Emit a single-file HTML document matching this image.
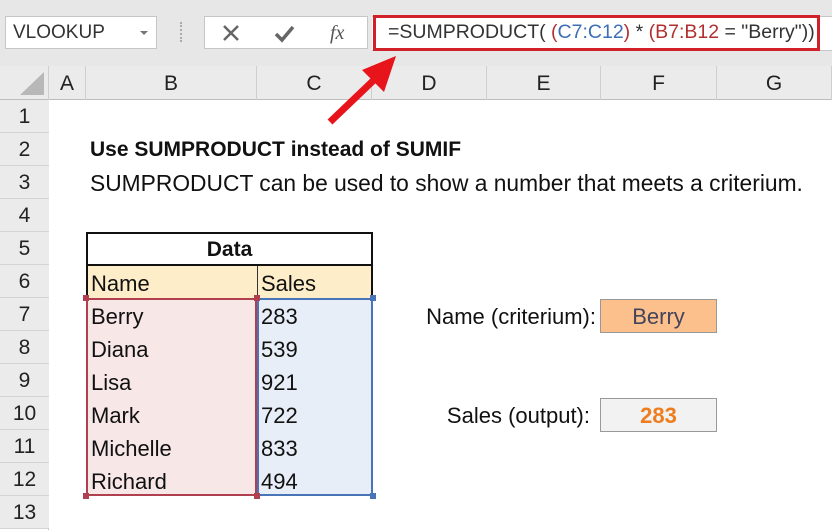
<!DOCTYPE html>
<html><head><style>
body{margin:0;width:832px;height:530px;overflow:hidden;background:#fff;font-family:"Liberation Sans",sans-serif;position:relative}
.a{position:absolute}
.t{position:absolute;font-size:22px;color:#111;white-space:nowrap;line-height:34px}
.ch{position:absolute;top:66px;height:34px;line-height:36px;text-align:center;font-size:21px;color:#222;border-right:1px solid #cfcfcf;box-sizing:border-box}
.rh{position:absolute;left:0;width:49px;height:33px;line-height:34px;text-align:center;font-size:21px;color:#222;border-bottom:1px solid #d4d4d4;box-sizing:border-box;background:#ebebeb}
</style></head><body>
<div class="a" style="left:0;top:0;width:832px;height:66px;background:#e7e7e7"></div>
<div class="a" style="left:5px;top:16px;width:152px;height:33px;background:#fff;border:1px solid #c6c6c6;box-sizing:border-box"></div>
<div class="t" style="left:13px;top:16px;font-size:19px;color:#333;line-height:33px">VLOOKUP</div>
<div class="a" style="left:140px;top:31px;border:4px solid transparent;border-top:4px solid #777"></div>
<div class="a" style="left:180px;top:22px;width:2px;height:20px;border-left:2px dotted #aaa"></div>
<div class="a" style="left:204px;top:16px;width:164px;height:33px;background:#fff;border:1px solid #c6c6c6;box-sizing:border-box"></div>
<svg class="a" style="left:220px;top:22px" width="140" height="22"><path d="M4 4L18 18M18 4L4 18" stroke="#666" stroke-width="2.5"/><path d="M56 12L62 18L73 5" stroke="#666" stroke-width="3.5" fill="none"/><text x="110" y="17" font-family="Liberation Serif" font-style="italic" font-size="20" fill="#555">fx</text></svg>
<div class="a" style="left:372px;top:16px;width:460px;height:33px;background:#fff;border-top:1px solid #c6c6c6;border-bottom:1px solid #c6c6c6"></div>
<div class="a" style="left:373px;top:15px;width:447px;height:36px;border:3px solid #d0202a;box-sizing:border-box"></div>
<div class="t" style="left:388px;top:16px;font-size:19.5px;color:#333;line-height:33px">=SUMPRODUCT( <span style="color:#b03030">(</span><span style="color:#3c6eb4">C7:C12</span><span style="color:#b03030">)</span> * <span style="color:#b03030">(B7:B12</span> = "Berry"))</div>
<div class="a" style="left:0;top:66px;width:832px;height:34px;background:#ebebeb;border-bottom:1px solid #bdbdbd;box-sizing:border-box"></div>
<div class="a" style="left:0;top:66px;width:49px;height:34px;border-right:1px solid #cfcfcf;box-sizing:border-box"></div>
<svg class="a" style="left:18px;top:70px" width="28" height="26"><path d="M26 2L26 25L2 25Z" fill="#b8b8b8"/></svg>
<div class="ch" style="left:49px;width:37px">A</div>
<div class="ch" style="left:86px;width:171px">B</div>
<div class="ch" style="left:257px;width:115px">C</div>
<div class="ch" style="left:372px;width:115px">D</div>
<div class="ch" style="left:487px;width:114px">E</div>
<div class="ch" style="left:601px;width:116px">F</div>
<div class="ch" style="left:717px;width:115px">G</div>
<div class="a" style="left:48px;top:100px;width:1px;height:430px;background:#bdbdbd"></div>
<div class="rh" style="top:100px">1</div><div class="rh" style="top:133px">2</div><div class="rh" style="top:166px">3</div><div class="rh" style="top:199px">4</div><div class="rh" style="top:232px">5</div><div class="rh" style="top:265px">6</div><div class="rh" style="top:298px">7</div><div class="rh" style="top:331px">8</div><div class="rh" style="top:364px">9</div><div class="rh" style="top:397px">10</div><div class="rh" style="top:430px">11</div><div class="rh" style="top:463px">12</div><div class="rh" style="top:496px">13</div>
<svg class="a" style="left:320px;top:50px" width="90" height="80"><path d="M10 72L56 28" stroke="#e8141c" stroke-width="7"/><path d="M76 6L42 20L64 42Z" fill="#e8141c"/></svg>
<div class="t" style="left:90px;top:133px;font-weight:bold;font-size:21px">Use SUMPRODUCT instead of SUMIF</div>
<div class="t" style="left:90px;top:166px;font-size:22.8px">SUMPRODUCT can be used to show a number that meets a criterium.</div>
<div class="a" style="left:86px;top:232px;width:287px;height:34px;border:2px solid #111;box-sizing:border-box"></div>
<div class="t" style="left:86px;top:233px;width:287px;text-align:center;font-weight:bold;font-size:21px">Data</div>
<div class="a" style="left:86px;top:266px;width:287px;height:32px;background:#fdedc8;border-left:2px solid #111;border-right:2px solid #111;box-sizing:border-box"></div>
<div class="a" style="left:257px;top:266px;width:1px;height:32px;background:#333"></div>
<div class="t" style="left:91px;top:267px">Name</div><div class="t" style="left:261px;top:267px">Sales</div>
<div class="a" style="left:86px;top:298px;width:171px;height:198px;background:#f8e7e7;border:2px solid #b04050;box-sizing:border-box"></div>
<div class="a" style="left:257px;top:298px;width:116px;height:198px;background:#e8eef7;border:2px solid #4a74b8;box-sizing:border-box"></div>
<div class="a" style="left:83px;top:295px;width:6px;height:6px;background:#b04050"></div>
<div class="a" style="left:254px;top:295px;width:6px;height:6px;background:#b04050"></div>
<div class="a" style="left:83px;top:493px;width:6px;height:6px;background:#b04050"></div>
<div class="a" style="left:254px;top:493px;width:6px;height:6px;background:#b04050"></div>
<div class="a" style="left:370px;top:295px;width:6px;height:6px;background:#4a74b8"></div>
<div class="a" style="left:370px;top:493px;width:6px;height:6px;background:#4a74b8"></div>
<div class="t" style="left:91px;top:300px">Berry</div><div class="t" style="left:261px;top:300px">283</div>
<div class="t" style="left:91px;top:333px">Diana</div><div class="t" style="left:261px;top:333px">539</div>
<div class="t" style="left:91px;top:366px">Lisa</div><div class="t" style="left:261px;top:366px">921</div>
<div class="t" style="left:91px;top:399px">Mark</div><div class="t" style="left:261px;top:399px">722</div>
<div class="t" style="left:91px;top:432px">Michelle</div><div class="t" style="left:261px;top:432px">833</div>
<div class="t" style="left:91px;top:465px">Richard</div><div class="t" style="left:261px;top:465px">494</div>
<div class="t" style="left:396px;top:300px;width:200px;text-align:right">Name (criterium):</div>
<div class="a" style="left:600px;top:299px;width:117px;height:34px;background:#fcc08c;border:1px solid #999;box-sizing:border-box"></div>
<div class="t" style="left:600px;top:300px;width:117px;text-align:center;color:#44445a">Berry</div>
<div class="t" style="left:390px;top:399px;width:200px;text-align:right">Sales (output):</div>
<div class="a" style="left:600px;top:398px;width:117px;height:34px;background:#f2f2f2;border:1px solid #999;box-sizing:border-box"></div>
<div class="t" style="left:600px;top:399px;width:117px;text-align:center;color:#ed7d1f;font-weight:bold">283</div>
</body></html>
